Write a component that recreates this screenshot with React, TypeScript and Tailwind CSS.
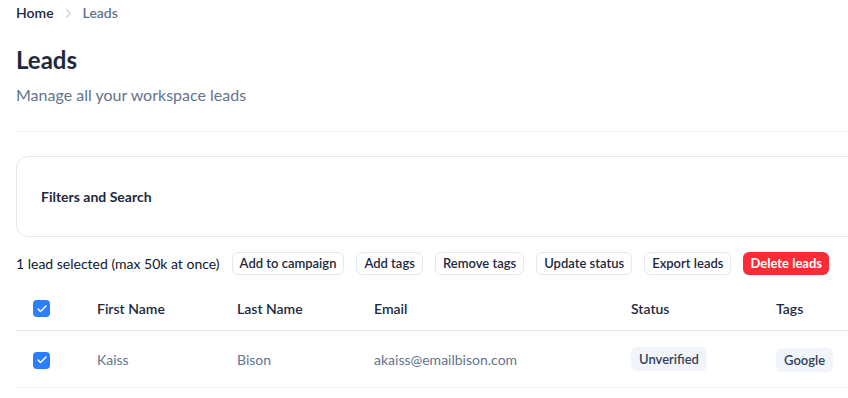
import React from 'react';
import { ChevronRight, Check } from 'lucide-react';

const actions = ['Add to campaign', 'Add tags', 'Remove tags', 'Update status', 'Export leads'];

const leads = [
  { first: 'Kaiss', last: 'Bison', email: 'akaiss@emailbison.com', status: 'Unverified', tags: ['Google'] },
];

function Checkbox() {
  return (
    <div className="flex h-[17px] w-[17px] items-center justify-center rounded-[4px] bg-blue-500">
      <Check size={12} strokeWidth={3} className="text-white" />
    </div>
  );
}

const cols = 'grid grid-cols-[81px_140px_137px_257px_145px_1fr] items-center';

export default function App() {
  return (
    <div className="w-full overflow-hidden bg-white" style={{ fontFamily: 'Lato, "Noto Sans", sans-serif' }}>
      <div className="w-[1000px] px-4 pt-[3px]">
        {/* breadcrumb */}
        <nav className="flex items-center gap-[7px] text-sm leading-5">
          <span className="font-semibold text-slate-800">Home</span>
          <ChevronRight size={15} className="text-slate-300" />
          <span className="font-semibold text-slate-500">Leads</span>
        </nav>

        <header className="mt-[21px]">
          <h1 className="text-2xl leading-8 font-bold text-slate-800">Leads</h1>
          <p className="mt-[7px] text-base leading-6 text-slate-500">Manage all your workspace leads</p>
        </header>

        <div className="mt-[24px] h-px bg-slate-100" />

        <div className="mt-[24px] rounded-xl border border-slate-200 px-6 pt-[30px] pb-[29px]">
          <h3 className="text-sm leading-5 font-bold text-slate-800">Filters and Search</h3>
        </div>

        {/* bulk actions */}
        <div className="mt-[15px] flex items-center gap-3">
          <span className="text-sm leading-5 text-slate-900">1 lead selected (max 50k at once)</span>
          {actions.map((a) => (
            <button
              key={a}
              className="h-[23px] rounded-md border border-slate-200 bg-white px-[7px] text-[13px] font-semibold text-slate-800"
            >
              {a}
            </button>
          ))}
          <button className="h-[23px] rounded-md bg-red-500 px-[7px] text-[13px] font-bold text-white">
            Delete leads
          </button>
        </div>

        {/* table */}
        <div className="mt-3">
          <div className={`${cols} h-[44px] border-b border-slate-200 text-sm font-semibold text-slate-800`}>
            <div className="pl-[17px]"><Checkbox /></div>
            <div>First Name</div>
            <div>Last Name</div>
            <div>Email</div>
            <div>Status</div>
            <div>Tags</div>
          </div>
          {leads.map((l) => (
            <div key={l.email} className={`${cols} h-[57px] border-b border-slate-100 pt-[2px] text-sm text-slate-500`}>
              <div className="pl-[17px]"><Checkbox /></div>
              <div>{l.first}</div>
              <div>{l.last}</div>
              <div>{l.email}</div>
              <div>
                <span className="-mt-1 inline-block rounded-md bg-slate-100 px-2 py-[3px] text-[13px] font-semibold text-slate-700">
                  {l.status}
                </span>
              </div>
              <div>
                {l.tags.map((t) => (
                  <span key={t} className="inline-block rounded-md bg-slate-100 px-2 py-[3px] text-[13px] font-semibold text-slate-700">
                    {t}
                  </span>
                ))}
              </div>
            </div>
          ))}
        </div>
      </div>
    </div>
  );
}
